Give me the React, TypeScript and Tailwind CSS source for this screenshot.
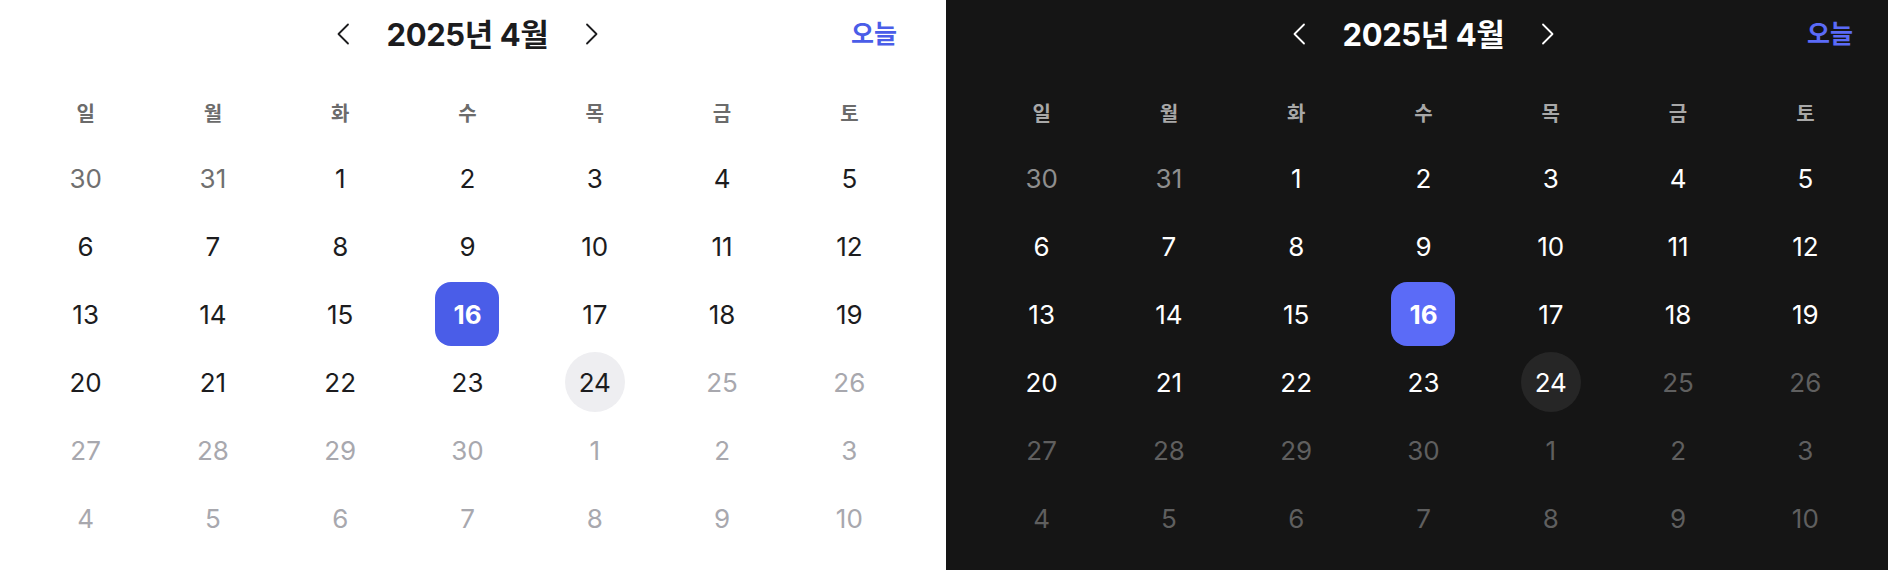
import React from "react";

type Cell = { d: number; kind: "prev" | "cur" | "dis" };

const weeks: Cell[][] = (() => {
  const cells: Cell[] = [];
  cells.push({ d: 30, kind: "prev" }, { d: 31, kind: "prev" });
  for (let i = 1; i <= 30; i++) cells.push({ d: i, kind: i <= 24 ? "cur" : "dis" });
  for (let i = 1; i <= 10; i++) cells.push({ d: i, kind: "dis" });
  const rows: Cell[][] = [];
  for (let r = 0; r < 6; r++) rows.push(cells.slice(r * 7, r * 7 + 7));
  return rows;
})();

const days = ["일", "월", "화", "수", "목", "금", "토"];

function Chevron({ dir, color }: { dir: "l" | "r"; color: string }) {
  return (
    <svg width="14" height="22" viewBox="0 0 14 22" fill="none">
      <polyline
        points={dir === "l" ? "12,1.5 2.5,11 12,20.5" : "2,1.5 11.5,11 2,20.5"}
        stroke={color}
        strokeWidth="1.8"
        strokeLinecap="round"
        strokeLinejoin="round"
      />
    </svg>
  );
}

function Calendar({ dark }: { dark: boolean }) {
  const textMain = dark ? "text-white" : "text-[#1c1c1e]";
  return (
    <div className="w-[891px]">
      <div className="grid grid-cols-[1fr_auto_1fr] items-center h-[68px]">
        <div />
        <div className="flex items-center gap-[37px]">
          <Chevron dir="l" color={dark ? "#ffffff" : "#1c1c1e"} />
          <div className={`text-[31px] font-bold tracking-[-0.4px] leading-none ${textMain}`}>
            2025년 4월
          </div>
          <Chevron dir="r" color={dark ? "#ffffff" : "#1c1c1e"} />
        </div>
        <div
          className={`justify-self-end mr-[16px] text-[25px] font-semibold leading-none ${
            dark ? "text-[#5b6bf7]" : "text-[#4a5de8]"
          }`}
        >
          오늘
        </div>
      </div>
      <div className="grid grid-cols-7 h-[60px] mt-[16px] items-center">
        {days.map((d) => (
          <div
            key={d}
            className={`text-center text-[20px] font-semibold ${dark ? "text-[#a8a8a8]" : "text-[#6b6b6b]"}`}
          >
            {d}
          </div>
        ))}
      </div>
      {weeks.map((row, ri) => (
        <div key={ri} className="grid grid-cols-7 h-[68px]">
          {row.map((c, ci) => {
            const isSel = c.kind === "cur" && c.d === 16;
            const isToday = c.kind === "cur" && c.d === 24;
            let color = textMain;
            if (c.kind === "prev") color = dark ? "text-[#8e8e8e]" : "text-[#707070]";
            if (c.kind === "dis") color = dark ? "text-[#5f5f5f]" : "text-[#a8a8ae]";
            return (
              <div key={ci} className="flex items-center justify-center">
                {isSel ? (
                  <div
                    className={`w-16 h-16 rounded-2xl flex items-center justify-center text-[26px] font-bold text-white ${
                      dark ? "bg-[#5b6bf7]" : "bg-[#4a5de8]"
                    }`}
                  >
                    {c.d}
                  </div>
                ) : isToday ? (
                  <div
                    className={`w-[60px] h-[60px] rounded-full flex items-center justify-center text-[26px] ${textMain} ${
                      dark ? "bg-[#262626]" : "bg-[#eeeef1]"
                    }`}
                  >
                    {c.d}
                  </div>
                ) : (
                  <div className={`text-[26px] ${color}`}>{c.d}</div>
                )}
              </div>
            );
          })}
        </div>
      ))}
    </div>
  );
}

export default function App() {
  return (
    <div
      className="flex w-[1888px] h-[570px] overflow-hidden"
      style={{ fontFamily: 'Inter, "Noto Sans CJK KR", sans-serif' }}
    >
      <div className="w-[946px] h-full bg-white pl-[22px]">
        <Calendar dark={false} />
      </div>
      <div className="flex-1 h-full bg-[#151515] pl-[32px]">
        <Calendar dark />
      </div>
    </div>
  );
}
